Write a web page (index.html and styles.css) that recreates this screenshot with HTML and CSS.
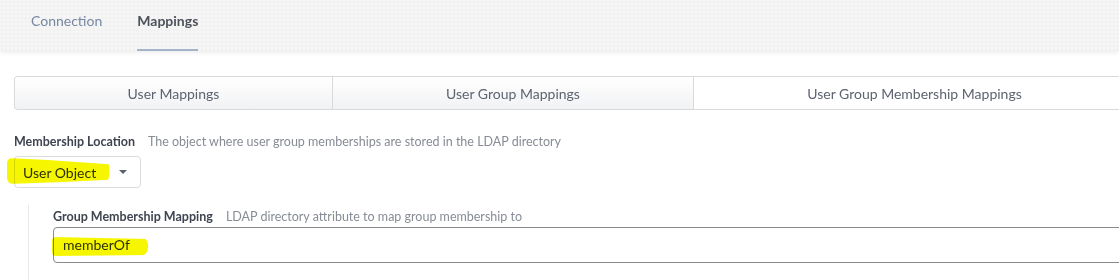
FILE: index.html
```html
<!DOCTYPE html>
<html lang="en">
<head>
    <meta charset="UTF-8">
    <title>LDAP Mappings</title>
    <link rel="stylesheet" href="styles.css">
</head>
<body>
    <div class="tabs">
        <div class="tab">Connection</div>
        <div class="tab active">Mappings</div>
    </div>

    <div class="content">
        <div class="segments">
            <div class="segment seg-user">User Mappings</div>
            <div class="segment seg-group">User Group Mappings</div>
            <div class="segment seg-member selected">User Group Membership Mappings</div>
        </div>

        <div class="field-head">
            <span class="field-label">Membership Location</span>
            <span class="field-desc">The object where user group memberships are stored in the LDAP directory</span>
        </div>
        <div class="select">
            <span class="marker marker-select"></span>
            <span class="select-value">User Object</span>
            <span class="caret"></span>
        </div>

        <div class="nested">
            <div class="field-head">
                <span class="field-label">Group Membership Mapping</span>
                <span class="field-desc">LDAP directory attribute to map group membership to</span>
            </div>
            <div class="input">
                <span class="marker marker-input"></span>
                <span class="input-value">memberOf</span>
            </div>
        </div>
    </div>
</body>
</html>
```

FILE: styles.css
```css
body {
    margin: 0;
    font-family: 'Lato', 'Liberation Sans', sans-serif;
    background: white;
    color: #4a4f5a;
    overflow: hidden;
}

.tabs {
    display: flex;
    gap: 35px;
    height: 51px;
    padding-left: 31px;
    background-color: #f5f5f5;
    background-image: radial-gradient(rgba(0, 0, 0, 0.025) 1px, transparent 1px);
    background-size: 4px 4px;
    box-shadow: 0 2px 4px rgba(0, 0, 0, 0.07);
}

.tab {
    box-sizing: border-box;
    height: 51px;
    padding-top: 12px;
    font-size: 14px;
    line-height: 18px;
    color: #7787a0;
}

.tab.active {
    font-weight: bold;
    color: #4d525c;
    border-bottom: 2px solid #a3b3c8;
}

.content {
    padding: 25px 0 0 14px;
}

.segments {
    display: flex;
    width: 1121px;
    height: 34px;
    box-sizing: border-box;
    border: 1px solid #d9d9d9;
    border-right: none;
    border-radius: 4px 0 0 4px;
    overflow: hidden;
}

.segment {
    display: flex;
    align-items: center;
    justify-content: center;
    font-size: 14px;
    color: #5d6370;
    background: linear-gradient(#ffffff, #f1f2f4);
    border-right: 1px solid #d9d9d9;
}

.seg-user {
    width: 317px;
}

.seg-group {
    width: 360px;
}

.seg-member {
    flex: 1;
}

.segment.selected {
    background: white;
    border-right: none;
}

.field-head {
    display: flex;
    gap: 13px;
    margin-top: 24px;
    font-size: 12.5px;
    line-height: 16px;
}

.field-label {
    font-weight: bold;
    color: #3f4550;
}

.field-desc {
    color: #878c95;
}

.select {
    position: relative;
    display: flex;
    align-items: center;
    justify-content: space-between;
    box-sizing: border-box;
    width: 127px;
    height: 32px;
    margin-top: 6px;
    padding: 0 13px 0 8px;
    border: 1px solid #dcdcdc;
    border-radius: 4px;
    font-size: 14px;
    color: #2f3338;
}

.caret {
    width: 0;
    height: 0;
    border-left: 4px solid transparent;
    border-right: 4px solid transparent;
    border-top: 4px solid #5a6270;
}

.nested {
    margin: 17px 0 0 14px;
    padding: 4px 0 20px 24px;
    border-left: 1px solid #e8e8e8;
}

.nested .field-head {
    margin-top: 0;
}

.input {
    position: relative;
    box-sizing: border-box;
    width: 1100px;
    height: 36px;
    margin-top: 2px;
    padding-left: 9px;
    border: 1px solid #8a8a8a;
    border-radius: 4px;
    font-size: 14px;
    line-height: 34px;
    color: #2f3338;
}

/* yellow highlighter strokes drawn over the values */
.marker {
    position: absolute;
    background: #f6f600;
    mix-blend-mode: multiply;
    filter: blur(0.6px);
}

.marker-select {
    left: -8px;
    top: 1px;
    width: 102px;
    height: 26px;
    border-radius: 5px 8px 8px 6px;
    clip-path: polygon(0 0, 40% 8%, 100% 24%, 100% 84%, 55% 92%, 0 100%);
}

.marker-input {
    left: -2px;
    top: 9px;
    width: 96px;
    height: 19px;
    border-radius: 4px 8px 8px 4px;
    clip-path: polygon(0 0, 100% 10%, 100% 95%, 0 100%);
}
```
